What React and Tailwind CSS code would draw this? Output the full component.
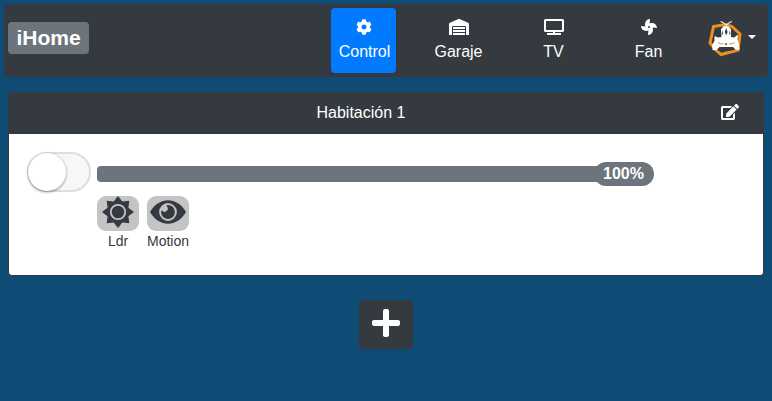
import { FaCog, FaWarehouse, FaTv, FaFan, FaEdit, FaPlus } from "react-icons/fa";

function NavItem({ icon, label, active }) {
  return (
    <a
      className={`flex h-[65px] w-[65px] flex-col items-center rounded pt-[11px] text-white ${active ? "bg-[#007bff]" : ""}`}
    >
      {icon}
      <span className={`mt-[5px] leading-6 ${active ? "pl-0.5" : ""}`}>{label}</span>
    </a>
  );
}

function Logo() {
  return (
    <svg width="36" height="38" viewBox="0 0 36 38" fill="none">
      <path d="M5.5 6.5 L18 4.5 L24 6.5 L32 14 L30 30 L13 34.5 L9 31 L2 23 Z" stroke="#ec9120" strokeWidth="3" />
      <path
        d="M6.5 16 L10 17.5 L13.5 17 L13 9 L16 6 H20 L23 9 L23 17 L26 17.5 L30 14.5 L29.5 19 L31 24 L31.5 30 L27.5 29.5 L25 27 L11.5 27 L8 30.5 L4.5 30 L4 25 L6.5 21 Z"
        fill="#fff"
      />
      <path d="M12.5 1.5 L15 2.5 L20 6.5 M24 1.5 L21.5 2.5 L16.5 6.5" stroke="#e8e8e8" strokeWidth="1.2" />
      <path d="M18.2 8 L16.8 12 L18.2 15.5 L19.6 12 Z M14.8 10 L15.2 15 L14 14 Z M21.8 10 L21.2 15 L22.4 14 Z" fill="#343a40" />
      <path d="M10 22.5 L13 24 L15.5 23.5 M21 23.5 L23.5 24 L26.5 22.5" stroke="#dfa04b" strokeWidth="1.1" />
      <path d="M16.5 23.5 H19.5 L18 25.5 Z M11.5 28 H25 L27 30 L12 31.5 L9.5 30 Z" fill="#343a40" />
    </svg>
  );
}

function SunIcon() {
  return (
    <svg width="32" height="32" viewBox="-16 -16 32 32">
      <path
        d="M0-16 L4.3-10.4 L11.3-11.3 L10.4-4.3 L16 0 L10.4 4.3 L11.3 11.3 L4.3 10.4 L0 16 L-4.3 10.4 L-11.3 11.3 L-10.4 4.3 L-16 0 L-10.4-4.3 L-11.3-11.3 L-4.3-10.4 Z"
        fill="#343a40"
      />
      <circle r="7.2" fill="#343a40" stroke="#c4c4c4" strokeWidth="1.8" />
    </svg>
  );
}

function EyeIcon() {
  return (
    <svg width="36" height="24" viewBox="-18 -12 36 24">
      <path d="M-18 0 C-9-15.6 9-15.6 18 0 C9 15.6-9 15.6-18 0 Z" fill="#343a40" />
      <circle r="7.9" fill="#343a40" stroke="#c4c4c4" strokeWidth="2" />
      <path d="M-5.7-1.2 A2.6 2.6 0 1 0-1.2-5.7 L-1.4-7.5 L-5-5.5 L-7.5-1.5 Z" fill="#c4c4c4" />
    </svg>
  );
}

function Sensor({ icon, label }) {
  return (
    <div className="flex w-[42px] flex-col items-center text-sm text-[#343a40]">
      <div className="flex h-[35px] w-full justify-center rounded-[9px] bg-[#c4c4c4]">{icon}</div>
      <span className="leading-[21px]">{label}</span>
    </div>
  );
}

export default function App() {
  return (
    <main className="h-[401px] overflow-hidden bg-[#0f4c75] p-1 font-['Liberation_Sans',Arial,sans-serif] text-base">
      <nav className="flex h-[73px] items-center rounded bg-[#343a40] pl-1">
        <span className="mb-[5px] flex h-8 w-[81px] items-center justify-center rounded bg-[#6c757d] pb-0.5 text-[21px] font-bold leading-none text-white">
          iHome
        </span>
        <div className="ml-[242px] flex gap-[30px]">
          <NavItem icon={<FaCog className="h-4 w-4" />} label="Control" active />
          <NavItem icon={<FaWarehouse className="h-4 w-5" />} label="Garaje" />
          <NavItem icon={<FaTv className="h-4 w-5" />} label="TV" />
          <NavItem icon={<FaFan className="h-4 w-4" />} label="Fan" />
        </div>
        <div className="mb-[3px] ml-[27px] flex items-center gap-1">
          <Logo />
          <span className="mb-1 border-x-4 border-t-4 border-x-transparent border-t-white" />
        </div>
      </nav>

      <section className="mx-1 mt-[15px] h-[184px] w-[756px] rounded bg-[#343a40] p-px">
        <header className="flex h-[41px] items-center pb-px text-white">
          <h2 className="w-[704px] text-center">Habitación 1</h2>
          <FaEdit className="mb-0.5 ml-2 h-4 w-[18px]" />
        </header>
        <div className="flex h-[141px] rounded-b-[3px] bg-white pl-[18px] pt-[18px]">
          <div className="h-10 w-16 shrink-0 rounded-full border-2 border-[#dedede] bg-[#f7f7f7]">
            <div className="-ml-px -mt-px size-[38px] rounded-full bg-white shadow-[0_1px_3px_rgba(0,0,0,0.45)]" />
          </div>
          <div className="ml-1.5 w-[557px] pt-2.5">
            <div className="flex h-6 items-center">
              <div className="h-4 grow rounded-l bg-[#6c757d]" />
              <div className="-ml-2 flex h-6 w-[60px] items-center justify-center rounded-full bg-[#6c757d] pb-px pr-px font-bold leading-none text-white">
                100%
              </div>
            </div>
            <div className="mt-2.5 flex gap-2">
              <Sensor icon={<SunIcon />} label="Ldr" />
              <Sensor icon={<div className="mt-1"><EyeIcon /></div>} label="Motion" />
            </div>
          </div>
        </div>
      </section>

      <button className="mx-auto mt-6 flex h-[49px] w-[54px] justify-center rounded bg-[#343a40] pt-[7px] text-white">
        <FaPlus className="h-8 w-7" />
      </button>
    </main>
  );
}
